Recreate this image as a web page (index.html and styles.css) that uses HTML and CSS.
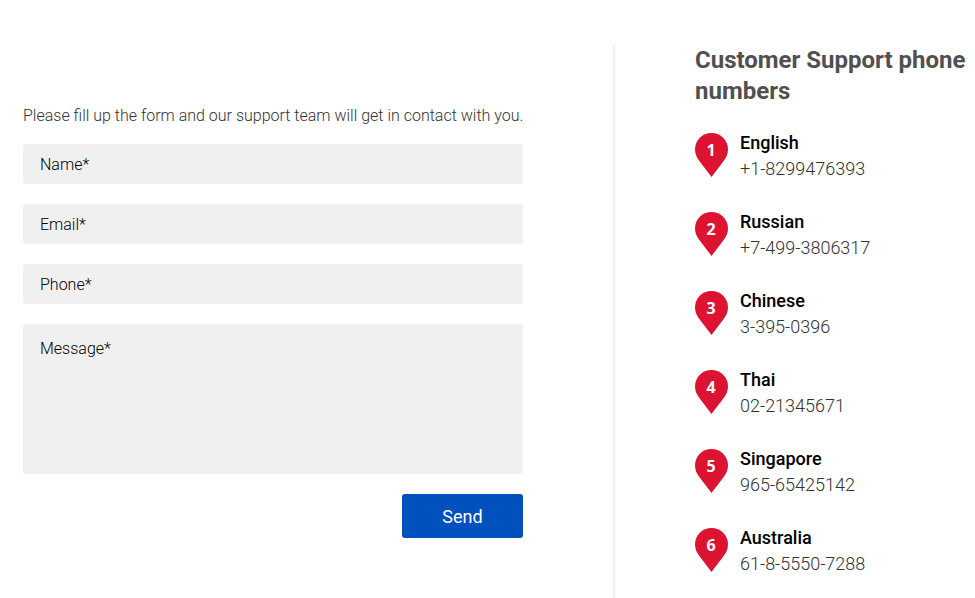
FILE: index.html
```html
<!DOCTYPE html>
<html lang="en">
  <head>
    <meta charset="UTF-8" />
    <meta name="viewport" content="width=device-width, initial-scale=1" />
    <title>Customer Support</title>
    <link rel="stylesheet" href="styles.css">
  </head>
  <body>
    <!-- Pin shape shared by the phone list -->
    <svg width="0" height="0" class="sprite" aria-hidden="true">
      <symbol id="pin" viewBox="0 0 33 44">
        <path d="M16.500 0C7.200 0 0 7.300 0 16.400C0 20.300 1.500 24 3.800 27.200L16.500 44L29.200 27.200C31.500 24 33 20.300 33 16.400C33 7.300 25.800 0 16.500 0Z" />
      </symbol>
    </svg>

    <main class="support">
      <section class="contact">
        <p class="intro">Please fill up the form and our support team will get in contact with you.</p>
        <form class="contact-form">
          <input class="field" type="text" name="name" placeholder="Name*" aria-label="Name" required />
          <input class="field" type="email" name="email" placeholder="Email*" aria-label="Email" required />
          <input class="field" type="tel" name="phone" placeholder="Phone*" aria-label="Phone" required />
          <textarea class="field message" name="message" placeholder="Message*" aria-label="Message" required></textarea>
          <button class="send" type="submit">Send</button>
        </form>
      </section>

      <section class="phones">
        <h2>Customer Support phone numbers</h2>
        <ul class="phone-list">
          <li>
            <svg class="pin"><use href="#pin" /><text x="16" y="23">1</text></svg>
            <div>
              <h3>English</h3>
              <a href="tel:+18299476393">+1-8299476393</a>
            </div>
          </li>
          <li>
            <svg class="pin"><use href="#pin" /><text x="16" y="23">2</text></svg>
            <div>
              <h3>Russian</h3>
              <a href="tel:+74993806317">+7-499-3806317</a>
            </div>
          </li>
          <li>
            <svg class="pin"><use href="#pin" /><text x="16" y="23">3</text></svg>
            <div>
              <h3>Chinese</h3>
              <a href="tel:33950396">3-395-0396</a>
            </div>
          </li>
          <li>
            <svg class="pin"><use href="#pin" /><text x="16" y="23">4</text></svg>
            <div>
              <h3>Thai</h3>
              <a href="tel:0221345671">02-21345671</a>
            </div>
          </li>
          <li>
            <svg class="pin"><use href="#pin" /><text x="16" y="23">5</text></svg>
            <div>
              <h3>Singapore</h3>
              <a href="tel:96565425142">965-65425142</a>
            </div>
          </li>
          <li>
            <svg class="pin"><use href="#pin" /><text x="16" y="23">6</text></svg>
            <div>
              <h3>Australia</h3>
              <a href="tel:61855507288">61-8-5550-7288</a>
            </div>
          </li>
        </ul>
      </section>
    </main>
  </body>
</html>
```
FILE: styles.css
```css
* {
  box-sizing: border-box;
}
body {
  margin: 0;
  background: #fff;
  color: #000;
  font-family: Roboto, Arial, sans-serif;
  font-size: 16px;
  font-weight: 300;
}
.sprite {
  display: none;
}
.support {
  display: flex;
  min-height: 100vh;
  padding-top: 45px;
}
.contact {
  flex: 1;
  padding: 60px 70px 0 23px;
}
.intro {
  margin: 0 0 18px;
  color: #333;
  line-height: 21px;
}
.contact-form {
  display: flex;
  flex-direction: column;
  gap: 20px;
  margin-right: 20px;
}
.field {
  width: 100%;
  height: 40px;
  padding: 0 17px;
  border: 0;
  border-radius: 3px;
  background: #f0f0f0;
  color: #000;
  font: inherit;
}
.field::placeholder {
  color: #000;
  opacity: 1;
}
.message {
  display: block;
  height: 150px;
  padding-top: 15px;
  resize: none;
}
.send {
  align-self: flex-end;
  width: 121px;
  height: 44px;
  border: 0;
  border-radius: 3px;
  background: #0050be;
  color: #fff;
  font: 400 18px Roboto, Arial, sans-serif;
  cursor: pointer;
}
.phones {
  width: 362px;
  padding-left: 80px;
  border-left: 2px solid #f0f0f0;
}
.phones h2 {
  margin: 0 0 23px;
  color: #505050;
  font-size: 24px;
  font-weight: 700;
  line-height: 31px;
}
.phone-list {
  display: grid;
  gap: 27px;
  margin: 0;
  padding: 0;
  list-style: none;
}
.phone-list li {
  display: flex;
  gap: 12px;
}
.phone-list h3 {
  margin: 0;
  font-size: 18px;
  font-weight: 500;
  line-height: 26px;
}
.phone-list a {
  display: block;
  color: #333;
  font-size: 18px;
  line-height: 26px;
  text-decoration: none;
}
.pin {
  width: 33px;
  height: 44px;
  margin-top: 3px;
  fill: #dc1432;
}
.pin text {
  fill: #fff;
  font-family: "Open Sans", Arial, sans-serif;
  font-size: 16px;
  font-weight: 700;
  text-anchor: middle;
}
```
